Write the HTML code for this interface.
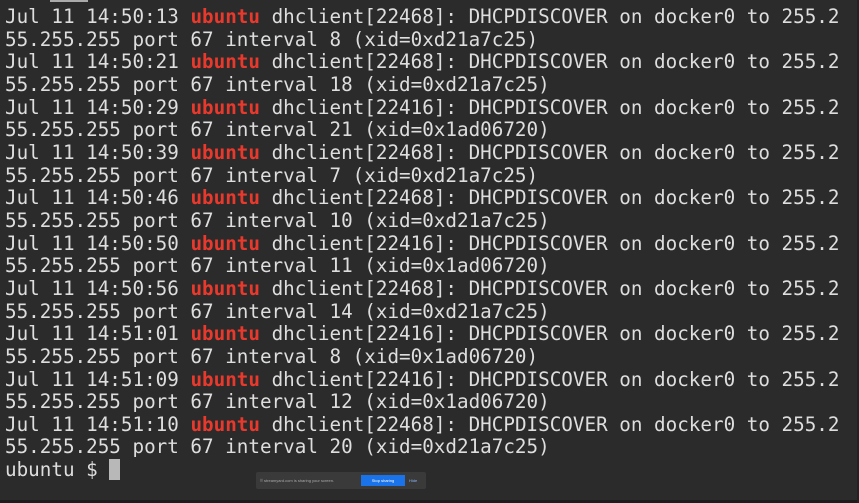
<!DOCTYPE html>
<html><head><style>
html,body{margin:0;padding:0;background:#2b2b2b;width:859px;height:503px;overflow:hidden}
body{position:relative}
pre{margin:0;position:absolute;left:5px;top:6px;font-family:"DejaVu Sans Mono","Liberation Mono",monospace;font-size:19.25px;line-height:22.65px;color:#dedede;white-space:pre}
b{color:#e8392c;font-weight:bold}
.cur{display:inline-block;width:11px;height:21px;background:#b8b8b8;vertical-align:-4px}
.bar{position:absolute;left:256px;top:472px;width:170px;height:17px;background:#3a3a3a;border-radius:2px;font-family:"Liberation Sans",sans-serif;font-size:4px;color:#aaa}
.bar span{position:absolute;top:6px}
.btn{position:absolute;left:105px;top:3px;width:44px;height:11px;background:#1a73e8;color:#fff;font-size:4px;text-align:center;line-height:11px}
.top{position:absolute;left:50px;top:0;width:38px;height:2px;background:#aaa}
.bot{position:absolute;left:0;top:500px;width:859px;height:3px;background:#1c1c1c}
.rt{position:absolute;left:857px;top:0;width:2px;height:503px;background:#222}
</style></head><body>
<div class="top"></div>
<pre>Jul 11 14:50:13 <b>ubuntu</b> dhclient[22468]: DHCPDISCOVER on docker0 to 255.2
55.255.255 port 67 interval 8 (xid=0xd21a7c25)
Jul 11 14:50:21 <b>ubuntu</b> dhclient[22468]: DHCPDISCOVER on docker0 to 255.2
55.255.255 port 67 interval 18 (xid=0xd21a7c25)
Jul 11 14:50:29 <b>ubuntu</b> dhclient[22416]: DHCPDISCOVER on docker0 to 255.2
55.255.255 port 67 interval 21 (xid=0x1ad06720)
Jul 11 14:50:39 <b>ubuntu</b> dhclient[22468]: DHCPDISCOVER on docker0 to 255.2
55.255.255 port 67 interval 7 (xid=0xd21a7c25)
Jul 11 14:50:46 <b>ubuntu</b> dhclient[22468]: DHCPDISCOVER on docker0 to 255.2
55.255.255 port 67 interval 10 (xid=0xd21a7c25)
Jul 11 14:50:50 <b>ubuntu</b> dhclient[22416]: DHCPDISCOVER on docker0 to 255.2
55.255.255 port 67 interval 11 (xid=0x1ad06720)
Jul 11 14:50:56 <b>ubuntu</b> dhclient[22468]: DHCPDISCOVER on docker0 to 255.2
55.255.255 port 67 interval 14 (xid=0xd21a7c25)
Jul 11 14:51:01 <b>ubuntu</b> dhclient[22416]: DHCPDISCOVER on docker0 to 255.2
55.255.255 port 67 interval 8 (xid=0x1ad06720)
Jul 11 14:51:09 <b>ubuntu</b> dhclient[22416]: DHCPDISCOVER on docker0 to 255.2
55.255.255 port 67 interval 12 (xid=0x1ad06720)
Jul 11 14:51:10 <b>ubuntu</b> dhclient[22468]: DHCPDISCOVER on docker0 to 255.2
55.255.255 port 67 interval 20 (xid=0xd21a7c25)
ubuntu $ <span class="cur"></span></pre>
<div class="bar"><span style="left:4px">⠿ streamyard.com is sharing your screen.</span><div class="btn">Stop sharing</div><span style="left:153px;color:#8ab4f8">Hide</span></div>
<div class="bot"></div><div class="rt"></div>
</body></html>
